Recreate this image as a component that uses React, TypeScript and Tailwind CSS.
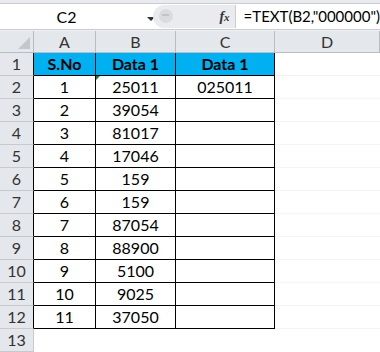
import React from 'react';

const rows: [string, string, string][] = [
  ['1', '25011', '025011'],
  ['2', '39054', ''],
  ['3', '81017', ''],
  ['4', '17046', ''],
  ['5', '159', ''],
  ['6', '159', ''],
  ['7', '87054', ''],
  ['8', '88900', ''],
  ['9', '5100', ''],
  ['10', '9025', ''],
  ['11', '37050', ''],
];

const font = { fontFamily: 'Lato, "Open Sans", sans-serif' };

export default function App() {
  return (
    <div className="w-[380px] h-[352px] overflow-hidden bg-white text-black" style={font}>
      {/* Formula bar */}
      <div className="h-[4px] bg-[#e8eaed] border-b border-[#c9ccd1]" />
      <div className="h-[26px] flex items-stretch border-b border-[#c9ccd1] bg-white">
        <div className="w-[160px] relative flex items-center justify-center">
          <span className="text-[16px] mr-[20px]">C2</span>
          <span className="absolute left-[147px] top-[13px] w-0 h-0 border-l-[4px] border-r-[4px] border-t-[4px] border-l-transparent border-r-transparent border-t-[#333]" />
        </div>
        <div className="w-[86px] my-[1px] bg-[#e9ebee] rounded-l-full relative flex items-center justify-end pr-[5px] border-r border-[#c9ccd1]">
          <span className="absolute left-[6px] top-[4px] w-[14px] h-[14px] rounded-full bg-[#d9dcdf]" />
          <span className="absolute left-[9px] top-[9px] w-[7px] h-[2px] bg-[#c0c3c7]" />
          <span className="italic font-bold text-[14px] text-[#333]" style={{ fontFamily: '"Liberation Serif", serif' }}>
            f<span className="text-[11px]">x</span>
          </span>
        </div>
        <div className="flex-1 flex items-center pl-[8px] text-[15px]">=TEXT(B2,"000000")</div>
      </div>
      <div className="h-[1px] bg-[#eef0f2]" />

      {/* Sheet grid */}
      <div className="grid grid-cols-[34px_62px_80px_99px_1fr] grid-rows-[22px] auto-rows-[23px]">
        {/* Column headers */}
        <div className="bg-[#e4e7eb] border-r border-b border-[#b9bcc1] relative">
          <span className="absolute right-[3px] bottom-[3px] w-0 h-0" style={{ borderBottom: '12px solid #c4c7cb', borderLeft: '12px solid transparent' }} />
        </div>
        {['A', 'B', 'C', 'D'].map((c) => (
          <div key={c} className="bg-[#e4e7eb] border-r border-b border-[#b9bcc1] flex items-center justify-center text-[16px] text-[#333]">
            {c}
          </div>
        ))}

        {/* Row 1 */}
        <div className="bg-[#e4e7eb] border-r border-r-black border-b border-[#c6c9ce] flex items-center justify-center text-[16px] text-[#333]">1</div>
        <div className="bg-[#00b0f0] border-r border-b border-black flex items-center justify-center font-bold text-[16px]">S.No</div>
        <div className="bg-[#00b0f0] border-r border-b border-black flex items-center justify-center font-bold text-[16px]">Data 1</div>
        <div className="bg-[#00b0f0] border-r border-b border-black flex items-center justify-center font-bold text-[16px]">Data 1</div>
        <div className="border-b border-[#f2f2f2]" />

        {rows.map(([n, b, c], i) => (
          <React.Fragment key={i}>
            <div className="bg-[#e4e7eb] border-r border-r-black border-b border-[#c6c9ce] flex items-center justify-center text-[16px] text-[#333]">{i + 2}</div>
            <div className="border-r border-b border-black flex items-center justify-center text-[16px]">{n}</div>
            <div className="border-r border-b border-black flex items-center justify-center text-[16px] relative">
              {i === 0 && (
                <span className="absolute left-0 top-0 w-0 h-0" style={{ borderTop: '4px solid #1e7a3a', borderRight: '4px solid transparent' }} />
              )}
              {b}
            </div>
            <div className="border-r border-b border-black flex items-center justify-center text-[16px]">{c}</div>
            <div className="border-b border-[#f4f4f4]" />
          </React.Fragment>
        ))}

        {/* Row 13 */}
        <div className="bg-[#e4e7eb] border-r border-b border-[#c6c9ce] flex items-center justify-center text-[16px] text-[#333]">13</div>
        <div />
        <div />
        <div />
        <div />
      </div>
    </div>
  );
}
